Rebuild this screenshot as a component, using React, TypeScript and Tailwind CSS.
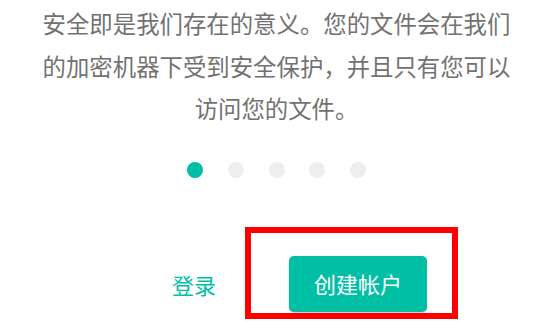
export default function App() {
  const dots = [0, 1, 2, 3, 4];
  return (
    <div
      className="relative h-[331px] w-[545px] overflow-hidden bg-white"
      style={{ fontFamily: '"Noto Sans CJK SC", "Noto Sans", sans-serif' }}
    >
      <p className="ml-[41px] w-[471px] pt-[2px] text-center text-[23.4px] leading-[42.5px] text-[#727272]">
        安全即是我们存在的意义。您的文件会在我们的加密机器下受到安全保护，并且只有您可以访问您的文件。
      </p>

      <div className="mt-[32px] ml-[187px] flex gap-[24.75px]">
        {dots.map((i) => (
          <span
            key={i}
            className={
              i === 0
                ? "h-4 w-4 rounded-full bg-[#00bfa5]"
                : "h-4 w-4 rounded-full bg-[#eeeeee]"
            }
          />
        ))}
      </div>

      <div className="mt-[49px] ml-[172px] flex items-end">
        <button className="mb-[7px] h-[56px] w-[44px] text-[22px] leading-[56px] text-[#00bfa5]">
          登录
        </button>
        <div className="ml-[29px] border-[6px] border-[#ff0000] pt-[23px] pr-[25px] pb-[1px] pl-[38px]">
          <button className="h-[56px] w-[138px] rounded-[5px] bg-[#00bfa5] text-[22px] text-white shadow-[0_1px_2px_rgba(0,0,0,0.25)]">
            创建帐户
          </button>
        </div>
      </div>
    </div>
  );
}
